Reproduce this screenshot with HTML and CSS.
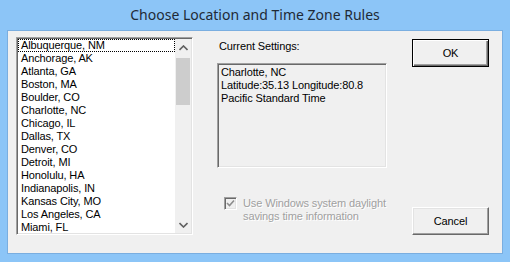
FILE: index.html
```html
<!DOCTYPE html>
<html>
<head>
<meta charset="utf-8">
<link rel="stylesheet" href="styles.css">
</head>
<body>
<div class="window">
  <div class="titlebar">Choose Location and Time Zone Rules</div>
  <div class="client">
    <div class="listbox">
      <ul class="items">
        <li class="focused">Albuquerque, NM</li>
        <li>Anchorage, AK</li>
        <li>Atlanta, GA</li>
        <li>Boston, MA</li>
        <li>Boulder, CO</li>
        <li>Charlotte, NC</li>
        <li>Chicago, IL</li>
        <li>Dallas, TX</li>
        <li>Denver, CO</li>
        <li>Detroit, MI</li>
        <li>Honolulu, HA</li>
        <li>Indianapolis, IN</li>
        <li>Kansas City, MO</li>
        <li>Los Angeles, CA</li>
        <li>Miami, FL</li>
      </ul>
      <div class="scrollbar">
        <div class="arrow">
          <svg width="9" height="6" viewBox="0 0 9 6"><path d="M0.5 5 L4.5 1 L8.5 5" fill="none" stroke="#606060" stroke-width="1.6"/></svg>
        </div>
        <div class="track"><div class="thumb"></div></div>
        <div class="arrow">
          <svg width="9" height="6" viewBox="0 0 9 6"><path d="M0.5 1 L4.5 5 L8.5 1" fill="none" stroke="#606060" stroke-width="1.6"/></svg>
        </div>
      </div>
    </div>
    <div class="middle">
      <div class="label">Current Settings:</div>
      <div class="settings">
        <div>Charlotte, NC</div>
        <div>Latitude:35.13 Longitude:80.8</div>
        <div>Pacific Standard Time</div>
      </div>
      <div class="check">
        <span class="box">
          <svg width="9" height="9" viewBox="0 0 9 9"><path d="M1 4 L3.5 6.5 L8 1.5" fill="none" stroke="#8d8d8d" stroke-width="1.6"/></svg>
        </span>
        <span class="checklabel">Use Windows system daylight savings time information</span>
      </div>
    </div>
    <div class="buttons">
      <button class="btn default">OK</button>
      <button class="btn">Cancel</button>
    </div>
  </div>
</div>
</body>
</html>
```

FILE: styles.css
```css
html, body {
  margin: 0;
  padding: 0;
}
body {
  width: 510px;
  height: 262px;
  overflow: hidden;
  font-family: "Liberation Sans", Arial, sans-serif;
}
.window {
  width: 510px;
  height: 262px;
  background: #8cc5f7;
  box-sizing: border-box;
  display: flex;
  flex-direction: column;
}
.titlebar {
  height: 31px;
  line-height: 30px;
  text-align: center;
  font-family: "Noto Sans", "Open Sans", sans-serif;
  font-size: 14px;
  color: #1f2a36;
}
.client {
  margin: 0 8px 0 8px;
  height: 222px;
  background: #f0f0f0;
  box-shadow: 0 0 0 1px #7aaee0;
  display: flex;
  padding: 6px 0 0 8px;
  box-sizing: border-box;
  font-size: 11px;
  letter-spacing: -0.12px;
  color: #000;
}
.listbox {
  width: 177px;
  height: 198px;
  box-sizing: border-box;
  border-top: 1px solid #a0a0a0;
  border-left: 1px solid #a0a0a0;
  border-right: 1px solid #fff;
  border-bottom: 1px solid #fff;
  box-shadow: inset 1px 1px 0 #696969, inset -1px -1px 0 #e3e3e3;
  background: #fff;
  display: flex;
  padding: 1px;
}
.items {
  list-style: none;
  margin: 0;
  padding: 0;
  flex: 1;
}
.items li {
  height: 13px;
  line-height: 13px;
  padding-left: 3px;
  white-space: nowrap;
  box-sizing: border-box;
}
.items li.focused {
  outline: 1px dotted #000;
  outline-offset: -1px;
}
.scrollbar {
  width: 16px;
  background: #f0f0f0;
  display: flex;
  flex-direction: column;
}
.arrow {
  height: 17px;
  display: flex;
  align-items: center;
  justify-content: center;
}
.track {
  flex: 1;
  padding: 0 1px;
}
.thumb {
  margin-top: 2px;
  height: 47px;
  background: #cdcdcd;
}
.middle {
  width: 170px;
  margin-left: 24px;
  display: flex;
  flex-direction: column;
}
.label {
  margin-top: 3px;
  height: 13px;
  line-height: 13px;
  padding-left: 2px;
}
.settings {
  margin-top: 10px;
  height: 105px;
  box-sizing: border-box;
  border-top: 1px solid #a0a0a0;
  border-left: 1px solid #a0a0a0;
  border-right: 1px solid #fff;
  border-bottom: 1px solid #fff;
  box-shadow: inset 1px 1px 0 #696969, inset -1px -1px 0 #e3e3e3;
  padding: 2px 0 0 3px;
  line-height: 13px;
}
.check {
  margin-top: 29px;
  display: flex;
  align-items: flex-start;
  padding-left: 7px;
  width: 190px;
}
.box {
  flex-shrink: 0;
  width: 13px;
  height: 13px;
  box-sizing: border-box;
  border-top: 1px solid #a0a0a0;
  border-left: 1px solid #a0a0a0;
  border-right: 1px solid #fff;
  border-bottom: 1px solid #fff;
  box-shadow: inset 1px 1px 0 #696969, inset -1px -1px 0 #e3e3e3;
  background: #f0f0f0;
  display: flex;
  align-items: center;
  justify-content: center;
}
.checklabel {
  margin-left: 6px;
  line-height: 13px;
  color: #a0a0a0;
  text-shadow: 1px 1px 0 #fff;
  width: 152px;
  flex-shrink: 0;
}
.buttons {
  margin-left: 25px;
  width: 77px;
  display: flex;
  flex-direction: column;
  justify-content: space-between;
  padding: 2px 0 18px 0;
  box-sizing: border-box;
}
.btn {
  width: 77px;
  height: 28px;
  box-sizing: border-box;
  font-family: "Liberation Sans", Arial, sans-serif;
  font-size: 11px;
  letter-spacing: -0.12px;
  color: #000;
  background: #f0f0f0;
  border-top: 1px solid #fff;
  border-left: 1px solid #fff;
  border-right: 1px solid #696969;
  border-bottom: 1px solid #696969;
  box-shadow: inset -1px -1px 0 #a0a0a0, inset 1px 1px 0 #e3e3e3;
  padding: 0;
  margin: 0;
}
.btn.default {
  border: 1px solid #000;
  box-shadow: inset 1px 1px 0 #fff, inset -1px -1px 0 #696969, inset -2px -2px 0 #a0a0a0;
  outline: none;
}
```
